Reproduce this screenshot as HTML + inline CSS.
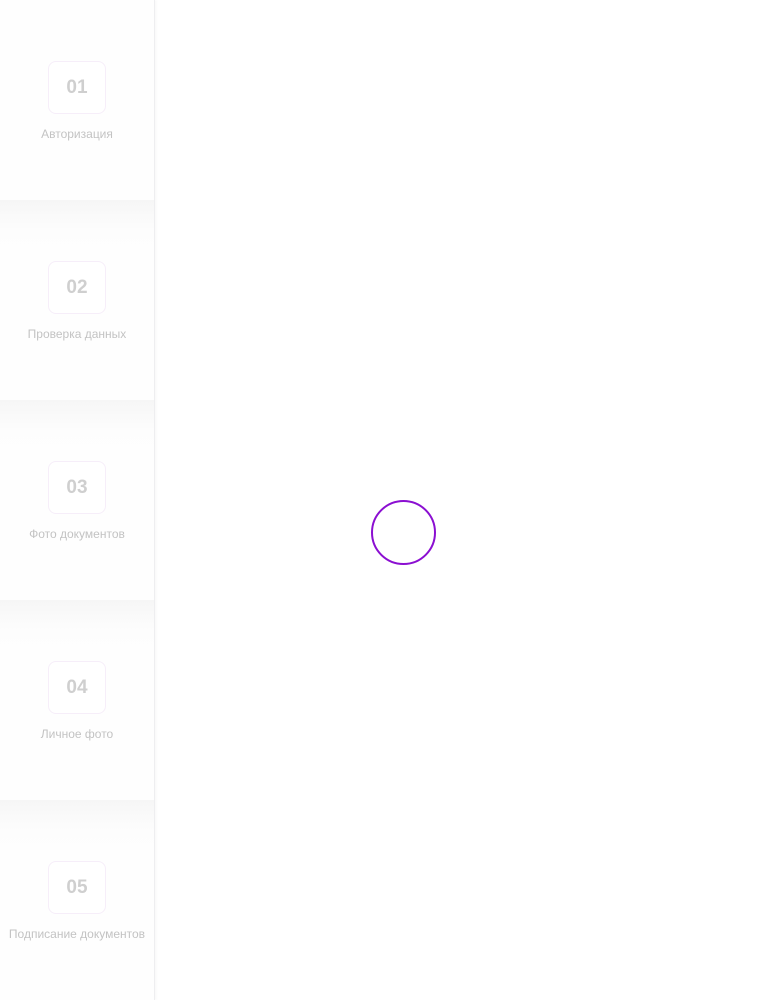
<!DOCTYPE html>
<html><head><meta charset="utf-8"><style>
html,body{margin:0;padding:0;width:768px;height:1000px;background:#fff;overflow:hidden;font-family:"Liberation Sans","DejaVu Sans",sans-serif}
.side{position:absolute;left:0;top:0;width:154px;height:1000px;background:#fff;border-right:1px solid #eeeef0;box-shadow:1px 0 3px rgba(0,0,0,0.04)}
.item{position:relative;height:200px;background:#fefefe}
.item+.item{background:linear-gradient(#f6f6f6 0,#fdfdfd 30px,#fefefe 60px)}
.box{position:absolute;left:48px;top:61px;width:56px;height:51px;border:1px solid #f6eef9;border-radius:8px;text-align:center;line-height:51px;font-weight:bold;font-size:19px;color:#cfcfcf;background:#fff}
.lbl{position:absolute;left:0;width:154px;top:127px;text-align:center;font-size:12px;color:#c3c3c3}
.spin{position:absolute;left:371px;top:500px;width:61px;height:61px;border:2px solid #8b0fd1;border-radius:50%}
</style></head><body>
<div class="side">
<div class="item"><div class="box">01</div><div class="lbl">Авторизация</div></div>
<div class="item"><div class="box">02</div><div class="lbl">Проверка данных</div></div>
<div class="item"><div class="box">03</div><div class="lbl">Фото документов</div></div>
<div class="item"><div class="box">04</div><div class="lbl">Личное фото</div></div>
<div class="item"><div class="box">05</div><div class="lbl">Подписание документов</div></div>
</div>
<div class="spin"></div>
</body></html>
